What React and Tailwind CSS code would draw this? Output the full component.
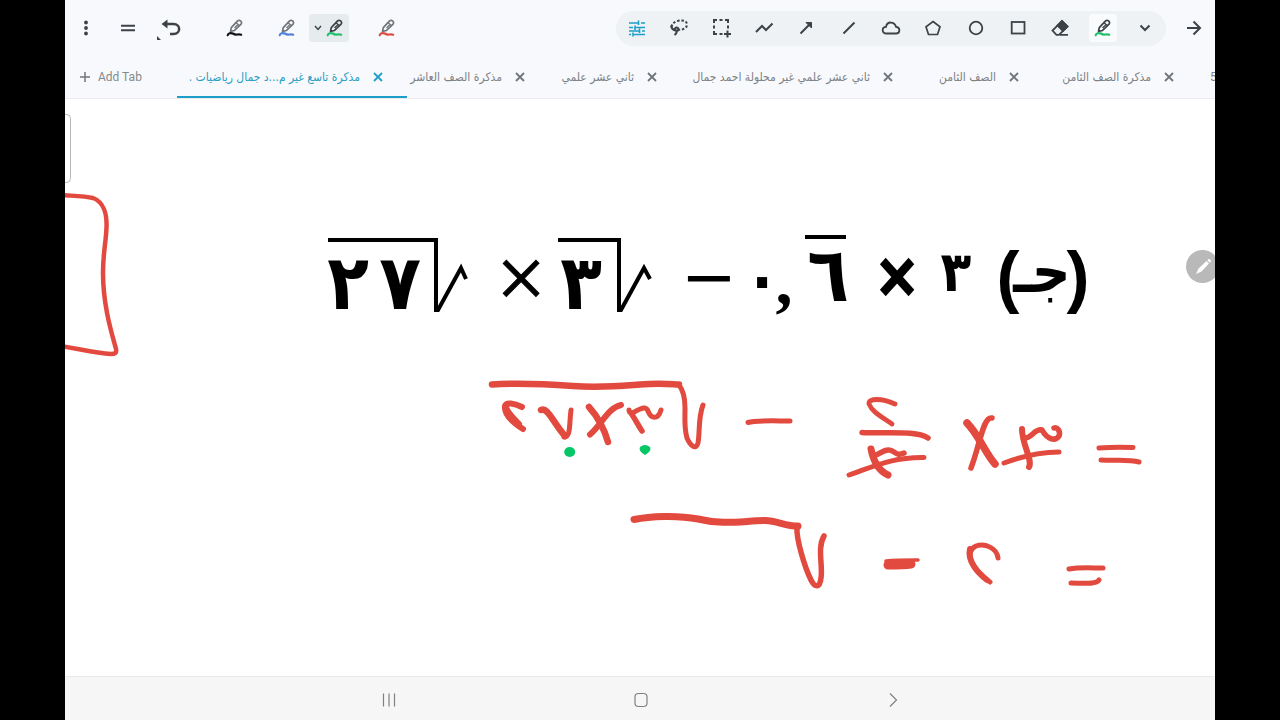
// src/App.jsx
const RED = "#e34a3f";
const INK = "#3c4246";

const tabs = [
  { label: "مذكرة تاسع غير م...د جمال رياضيات .", width: "w-[230px]", active: true },
  { label: "مذكرة الصف العاشر", width: "w-[142px]" },
  { label: "ثاني عشر علمي", width: "w-[132px]" },
  { label: "ثاني عشر علمي غير محلولة احمد جمال", width: "w-[236px]" },
  { label: "الصف الثامن", width: "w-[126px]" },
  { label: "مذكرة الصف الثامن", width: "w-[155px]" },
];

// Pen strokes, in canvas units
const strokes = [
  // box on the left edge
  { w: 4.5, d: "M60 195C75 196 85 196 93 198C104 202 107 215 106.5 227C106 243 103 252 103 273C103 306 112 334 116 349C117 353 115 354 111 354C94 353 80 349 60 346" },
  // first line: root of 27 x 3
  { w: 6.5, d: "M492 384.5C515 383 545 384 573 386S620 386 640 384.500S668 384 679 384.500" },
  { w: 5, d: "M679 385C683 390 685 397 685 408C685 420 684 428 687 438C690 445 696 451 698 443C700 432 698 418 703 405" },
  { w: 6, d: "M522 407C514 403 506 402 505 406C504 414 512 422 523 429" },
  { w: 6, d: "M506 406C506 410 511 416 519 424" },
  { w: 6.5, d: "M541 410C548 407 552 421 565 436" },
  { w: 5, d: "M564 437C571 437 569 425 571 410" },
  { w: 6.5, d: "M589 407C598 417 604 428 608 442" },
  { w: 6, d: "M621 405C608 408 602 424 590 434.500" },
  { w: 5, d: "M629 410C629 413 632 414 636 411C642 408 646 406 648 411C651 419 658 420 661 410" },
  { w: 5.5, d: "M631 413C635 419 638 425 642 431" },
  { w: 5, d: "M748 422.500C756 420 775 421 790 421" },
  // first line: 2/3 x 3
  { w: 4.8, d: "M895 404C882 398 868 398 869 404C872 412 882 417 892 424" },
  { w: 5.5, d: "M862 432.500C885 434 916 430 928 438" },
  { w: 7, d: "M871 449C873 459 877 470 888 475" },
  { w: 5.5, d: "M872 452C876 460 881 449 889 450C895 450 895 457 904 453" },
  { w: 5, d: "M849 475C875 466 893 457 924 457.500" },
  { w: 7.5, d: "M967 423C979 435 985 453 995 464" },
  { w: 5.5, d: "M992 418C983 416 980 445 971 468" },
  { w: 6, d: "M1022 429C1022 445 1033 460 1029 467" },
  { w: 5.5, d: "M1025 438C1032 438 1035 428 1042 430C1047 439 1055 442 1059 436C1061 431 1057 427 1054 428" },
  { w: 5, d: "M1004 463C1020 457 1038 452 1059 452" },
  { w: 5, d: "M1099 448C1112 447 1122 447 1133 447.500M1101 460C1116 461 1128 459 1139 462" },
  // second line: 2 minus an empty root
  { w: 7, d: "M634 519.500C650 516 678 515 698 519C722 525 742 521 765 520.500C778 521 785 526 798 526" },
  { w: 5.5, d: "M797 527C796 539 805 568 811 580C815 588 820 588 821 578C823 565 817 548 824 536" },
  { w: 9, d: "M888 565C896 565 904 565 911 564" },
  { w: 3.5, d: "M886 561C896 560 906 560 918 560" },
  { w: 5, d: "M998 558C997 548 985 543 976 546C963 552 973 571 990 582" },
  { w: 6, d: "M970 549C967 561 978 573 987 580" },
  { w: 5, d: "M1069 569C1080 567 1092 568 1103 568M1071 583C1081 583 1096 585 1099 580" },
];

function Icon({ size = 24, width = 2, color = INK, children }) {
  return (
    <svg
      width={size}
      height={size}
      viewBox="0 0 24 24"
      fill="none"
      stroke={color}
      strokeWidth={width}
      aria-hidden="true"
      className="shrink-0"
    >
      {children}
    </svg>
  );
}

function ToolButton({ label, className = "", children }) {
  return (
    <button
      type="button"
      aria-label={label}
      className={`flex h-7 w-7 shrink-0 items-center justify-center rounded ${className}`}
    >
      {children}
    </button>
  );
}

function PenIcon({ ink, body = "#70767a" }) {
  return (
    <svg width="18" height="18" viewBox="0 0 16 16" fill="none" strokeLinejoin="round" aria-hidden="true">
      <path
        d="M4 11L4.700 7.600L10.300 1.700Q11.500 .6 13 1.700Q14.400 3 13.400 4.500L7.600 10.200Z"
        stroke={body}
        strokeWidth="1.500"
      />
      <path d="M9 3.300L12 6M10.300 5.200L7.600 8" stroke={body} strokeWidth="1.200" />
      <path
        d="M1.500 14.500C2 12.500 4 12.200 6.500 13C8.500 15 11 12.800 13.500 14"
        stroke={ink}
        strokeWidth="1.900"
        strokeLinecap="round"
      />
    </svg>
  );
}

function CloseIcon({ color }) {
  return (
    <svg width="10" height="10" viewBox="0 0 10 10" stroke={color} strokeWidth="1.800" aria-hidden="true">
      <path d="M1 1L9 9M9 1L1 9" />
    </svg>
  );
}

function ShapeTools() {
  return (
    <div className="flex h-[35px] w-[550px] shrink-0 items-center justify-between rounded-full bg-[#eef2f4] px-[7px]">
      <ToolButton label="Settings">
        <Icon color="#1d9fc9" width={1.6}>
          <path d="M4 7H13.500M16 7H20M13.500 4.500V9M4 11.500H8M10 11.500H20M10 9.500V14M4 15H14M17 15H20M14.500 12.500V17M4 18.500H6M9 18.500H20M8 16.500V20.500" />
        </Icon>
      </ToolButton>
      <ToolButton label="Lasso">
        <Icon>
          <path d="M5 11C3 5 20 1 20 8.500C20 12 16 14 11 13.800" strokeDasharray="2.500 1.800" />
          <path d="M4 9.500C4.500 13 6 14 9 14.500C12 15 12 11.500 9.500 11.500C7 12 6.500 15.500 11.500 14.500M9.500 15C10 17 9 18 7.500 19" />
        </Icon>
      </ToolButton>
      <ToolButton label="Select area">
        <Icon>
          <path d="M4 7V4H7M9.500 4H12.500M15 4H18V7M18 9.500V12.500M4 9.500V12.500M4 15V18H7M9.500 18H12.500M17.500 14.500V21.500M14 18H21" />
        </Icon>
      </ToolButton>
      <ToolButton label="Polyline">
        <Icon>
          <path d="M4 16L10 10L14 14L20.500 7.500" />
        </Icon>
      </ToolButton>
      <ToolButton label="Arrow">
        <Icon>
          <path d="M6.500 17.500L15 9" />
          <path d="M12 6.500H17.500V12Z" fill={INK} stroke={INK} strokeWidth="1" />
        </Icon>
      </ToolButton>
      <ToolButton label="Line">
        <Icon>
          <path d="M6.500 17.500L17.500 6.500" />
        </Icon>
      </ToolButton>
      <ToolButton label="Cloud">
        <Icon width={1.8}>
          <path d="M7.500 17.500C2.500 17.500 2.500 11 7 10.800C8 5 15.500 5.200 17 10.800C21.500 11 21.500 17.500 17 17.500Z" />
        </Icon>
      </ToolButton>
      <ToolButton label="Polygon">
        <Icon width={1.7}>
          <path d="M12 5.500L19 10.700L16.500 18.500H7.500L5 10.700Z" />
        </Icon>
      </ToolButton>
      <ToolButton label="Circle">
        <Icon width={1.8}>
          <circle cx="12" cy="12" r="6.300" />
        </Icon>
      </ToolButton>
      <ToolButton label="Rectangle">
        <Icon width={1.8}>
          <rect x="5.700" y="6" width="12.800" height="11.500" />
        </Icon>
      </ToolButton>
      <ToolButton label="Eraser">
        <Icon width={1.8}>
          <path d="M8.500 18.800L4.500 14.500L14 5L19.500 10.500L11 18.800ZM12 18.800H20" />
          <path d="M9.500 9.500L14 5L19.500 10.500L15 15Z" fill={INK} />
        </Icon>
      </ToolButton>
      <ToolButton label="Pen" className="bg-[#fafbfc]">
        <PenIcon ink="#1fbf6b" body={INK} />
      </ToolButton>
      <ToolButton label="More tools">
        <Icon>
          <path d="M7.500 9.500L12 14L16.500 9.500" />
        </Icon>
      </ToolButton>
    </div>
  );
}

function Toolbar() {
  return (
    <div className="flex h-14 items-center justify-between px-[7px]">
      <div className="flex items-center">
        <ToolButton label="Menu">
          <svg width="6" height="16" viewBox="0 0 6 16" fill={INK} aria-hidden="true">
            <circle cx="3" cy="2.500" r="1.900" />
            <circle cx="3" cy="8" r="1.900" />
            <circle cx="3" cy="13.500" r="1.900" />
          </svg>
        </ToolButton>
        <ToolButton label="Pages" className="ml-3.5">
          <Icon>
            <path d="M5 9.700H19M5 14.300H19" />
          </Icon>
        </ToolButton>
        <ToolButton label="Undo" className="ml-[15px]">
          <svg width="28" height="28" viewBox="0 0 28 28" fill="none" aria-hidden="true">
            <path d="M8 10H16.500C24 10 24 20 16.500 20H13" stroke={INK} strokeWidth="2.500" />
            <path d="M10.500 5.500L4.500 10L10.500 14.500Z" fill={INK} />
            <path d="M0 22L4 26H0Z" fill={INK} />
          </svg>
        </ToolButton>
        <ToolButton label="Black pen" className="ml-9">
          <PenIcon ink="#111111" />
        </ToolButton>
        <ToolButton label="Blue pen" className="ml-6">
          <PenIcon ink="#4f7fd6" />
        </ToolButton>
        <button
          type="button"
          aria-label="Green pen"
          className="ml-2 flex h-7 w-10 items-center justify-center gap-1 rounded bg-[#e6ebed]"
        >
          <svg width="8" height="6" viewBox="0 0 8 6" fill="none" stroke={INK} strokeWidth="1.400" aria-hidden="true">
            <path d="M1 1L4 4.500L7 1" />
          </svg>
          <PenIcon ink="#1fbf6b" body={INK} />
        </button>
        <ToolButton label="Red pen" className="ml-6">
          <PenIcon ink="#dc4a41" />
        </ToolButton>
      </div>
      <div className="flex items-center gap-3.5">
        <ShapeTools />
        <ToolButton label="Next page">
          <Icon>
            <path d="M5 12H17.500M11.500 5.500L18 12L11.500 18.500" />
          </Icon>
        </ToolButton>
      </div>
    </div>
  );
}

function TabBar() {
  return (
    <nav className="flex h-[42px] overflow-hidden text-[12px]">
      <button
        type="button"
        className="flex w-28 shrink-0 items-center gap-2 pl-[15px] text-[#858a8d]"
      >
        <svg width="10" height="10" viewBox="0 0 10 10" stroke="#70767a" strokeWidth="1.500" aria-hidden="true">
          <path d="M5 0V10M0 5H10" />
        </svg>
        Add Tab
      </button>
      {tabs.map((tab) => (
        <div
          key={tab.label}
          className={`flex shrink-0 items-center justify-end gap-[13px] border-b-2 pt-0.5 pr-6 ${tab.width} ${
            tab.active ? "border-[#1d9fc9] text-[#2b9fc4]" : "border-transparent text-[#7d8285]"
          }`}
        >
          <a href="#" dir="rtl" className="font-['DejaVu_Sans_Condensed','DejaVu_Sans',sans-serif] whitespace-nowrap">
            {tab.label}
          </a>
          <button type="button" aria-label="Close tab">
            <CloseIcon color={tab.active ? "#1d9fc9" : "#70767a"} />
          </button>
        </div>
      ))}
      <a href="#" className="flex items-center pl-3 whitespace-nowrap text-[#7d8285]">
        5
      </a>
    </nav>
  );
}

function Formula() {
  return (
    <g
      fill="#000"
      className="font-['DejaVu_Sans_Condensed','DejaVu_Sans',sans-serif] font-bold"
      textAnchor="middle"
    >
      <g fill="none" stroke="#000" strokeWidth="4">
        <path d="M328 240H436V310H438L461 268L466 279" />
        <path d="M558 240H619V310H621L644 268L650 279" />
        <path d="M805 237H846" />
      </g>
      <text x="348" y="309" fontSize="76">٢</text>
      <text x="400" y="309" fontSize="76">٧</text>
      <g stroke="#000" className="font-['Liberation_Serif',serif] font-normal">
        <text x="521" y="308" fontSize="88">×</text>
        <text x="709" y="308" fontSize="88">−</text>
      </g>
      <text x="581" y="309" fontSize="76">٣</text>
      <text x="762" y="301" fontSize="64">٠</text>
      <text x="784" y="304" fontSize="68" className="font-['Liberation_Serif',serif]">,</text>
      <text x="828" y="301" fontSize="76">٦</text>
      <text x="897" y="296" fontSize="60" stroke="#000" strokeWidth="2">×</text>
      <text x="956" y="291" fontSize="56">٣</text>
      <text x="1008" y="300" fontSize="69" className="font-['Liberation_Sans',sans-serif]">(</text>
      <text x="1042" y="292" fontSize="60" direction="rtl">جـ</text>
      <text x="1078" y="300" fontSize="69" className="font-['Liberation_Sans',sans-serif]">)</text>
    </g>
  );
}

function Canvas() {
  return (
    <main className="relative flex flex-1 overflow-hidden bg-white">
      <svg viewBox="65 99 1150 577" className="w-full" role="img" aria-label="Whiteboard page">
        <rect x="55" y="114.500" width="15.500" height="68" rx="4" fill="#fff" stroke="#b8b8b8" />
        <Formula />
        <g fill="none" stroke={RED} strokeLinecap="round" strokeLinejoin="round">
          {strokes.map((s) => (
            <path key={s.d} d={s.d} strokeWidth={s.w} />
          ))}
        </g>
        <g fill="#05c765">
          <ellipse cx="569.700" cy="452" rx="5.500" ry="5" />
          <path d="M640 447Q645 443 650 447Q652 451 645 455Q638 451 640 447Z" />
        </g>
      </svg>
      <button
        type="button"
        aria-label="Edit"
        className="absolute top-[151px] -right-1 flex h-[33px] w-[33px] items-center justify-center rounded-full bg-[#b9b9b9]"
      >
        <svg width="18" height="18" viewBox="0 0 18 18" fill="#fff" aria-hidden="true">
          <path d="M2 16L4.500 10.500L12.500 3L15 5.500L7.500 13.500ZM13.300 2.200L14.500 1Q17.500 1.500 17 3.500L15.800 4.800Z" />
        </svg>
      </button>
    </main>
  );
}

function NavigationBar() {
  return (
    <footer className="flex h-11 justify-center border-t border-[#e9e9e9] bg-[#f6f6f6] pt-0.5 pl-0.5">
      <div className="flex w-[532px] items-center justify-between">
        <ToolButton label="Recents">
          <Icon width={1.2} color="#808080">
            <path d="M6.500 5.500V18.500M12 5.500V18.500M17.500 5.500V18.500" />
          </Icon>
        </ToolButton>
        <ToolButton label="Home">
          <Icon width={1.2} color="#808080">
            <rect x="6" y="5.500" width="12" height="13" rx="3.500" />
          </Icon>
        </ToolButton>
        <ToolButton label="Back">
          <Icon width={1.2} color="#808080">
            <path d="M9 5.500L15.500 12L9 18.500" />
          </Icon>
        </ToolButton>
      </div>
    </footer>
  );
}

export default function App() {
  return (
    <div className="min-h-screen bg-black px-[65px] font-['Roboto','DejaVu_Sans',sans-serif]">
      <div className="flex min-h-screen flex-col overflow-hidden bg-white">
        <header className="border-b border-[#ececee] bg-[#f8f9fc]">
          <Toolbar />
          <TabBar />
        </header>
        <Canvas />
        <NavigationBar />
      </div>
    </div>
  );
}
